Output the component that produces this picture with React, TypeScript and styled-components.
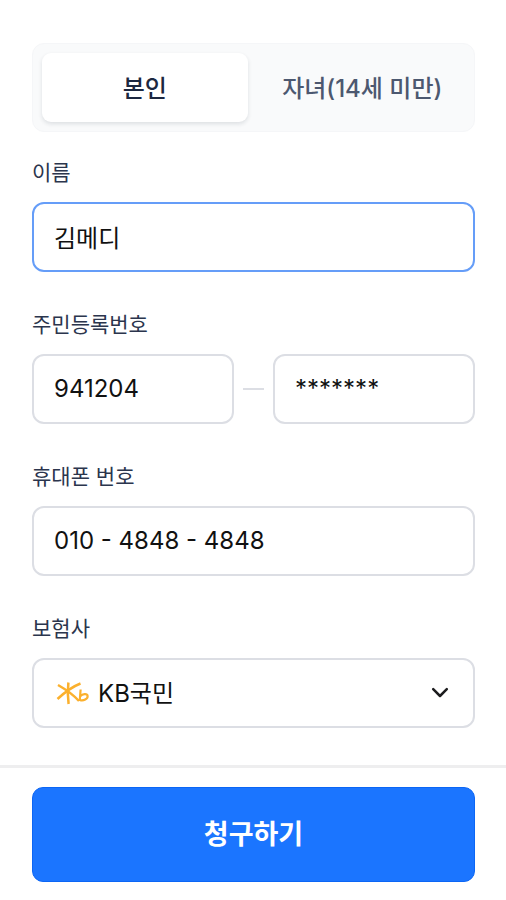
import React, { useState } from 'react';
import styled, { createGlobalStyle, css } from 'styled-components';

const GlobalStyle = createGlobalStyle`
  *, *::before, *::after { box-sizing: border-box; }
  body {
    margin: 0;
    background: #fff;
    color: #111;
    font-family: Inter, "Noto Sans CJK KR", sans-serif;
  }
  button, input, select { font: inherit; color: inherit; }
`;

const Page = styled.div`
  display: flex;
  flex-direction: column;
  min-height: 100vh;
`;

const Form = styled.form`
  display: flex;
  flex-direction: column;
  flex: 1;
  padding: 43px 31px 37px 32px;
`;

const Tabs = styled.div`
  display: grid;
  grid-template-columns: 1fr 1fr;
  gap: 12px;
  padding: 9px;
  margin-bottom: 27px;
  border: 1px solid #f5f6f8;
  border-radius: 12px;
  background: #f9fafb;
`;

const Tab = styled.button<{ $active: boolean }>`
  height: 69px;
  padding: 0 0 2px;
  border: 0;
  border-radius: 9px;
  background: ${({ $active }) => ($active ? '#fff' : 'transparent')};
  box-shadow: ${({ $active }) => ($active ? '0 2px 4px rgba(20, 30, 50, 0.12)' : 'none')};
  color: ${({ $active }) => ($active ? '#1c2740' : '#4c5870')};
  font-size: 24px;
  font-weight: 500;
  white-space: nowrap;
  cursor: pointer;
`;

const Fields = styled.div`
  display: flex;
  flex-direction: column;
  gap: 39px;
`;

const Field = styled.div`
  display: flex;
  flex-direction: column;
  gap: 15px;
`;

const Label = styled.label`
  color: #2b354d;
  font-size: 21px;
  line-height: 28px;
`;

const control = css`
  width: 100%;
  min-width: 0;
  height: 70px;
  border: 2px solid #dcdee4;
  border-radius: 12px;
  background: #fff;
  font-size: 24px;
  outline: none;
`;

const TextInput = styled.input<{ $highlighted?: boolean }>`
  ${control}
  padding: 0 20px 2px;
  border-color: ${({ $highlighted }) => ($highlighted ? '#659df8' : '#dcdee4')};
  &:focus { border-color: #659df8; }
`;

const SplitRow = styled.div`
  display: grid;
  grid-template-columns: 1fr 21px 1fr;
  align-items: center;
  gap: 9px;
`;

const Dash = styled.span`
  height: 2px;
  background: #dcdee4;
`;

const SelectWrap = styled.div`
  position: relative;
`;

const Select = styled.select`
  ${control}
  padding: 0 64px;
  appearance: none;
  cursor: pointer;
`;

const BankLogo = styled.svg`
  position: absolute;
  top: 22px;
  left: 24px;
  pointer-events: none;
`;

const Chevron = styled.svg`
  position: absolute;
  top: 28px;
  right: 26px;
  pointer-events: none;
`;

const Footer = styled.footer`
  padding: 19px 31px 19px 32px;
  border-top: 3px solid #eeeeef;
`;

const Submit = styled.button`
  width: 100%;
  height: 95px;
  padding: 0 0 4px;
  border: 1px solid #0c66f5;
  border-radius: 11px;
  background: #1b75ff;
  color: #fff;
  font-size: 27px;
  font-weight: 600;
  cursor: pointer;
`;

const people = ['본인', '자녀(14세 미만)'];

export default function App() {
  const [person, setPerson] = useState(0);

  return (
    <Page>
      <GlobalStyle />
      <Form id="claim" onSubmit={(e) => e.preventDefault()}>
        <Tabs role="tablist">
          {people.map((label, i) => (
            <Tab
              key={label}
              type="button"
              role="tab"
              aria-selected={person === i}
              $active={person === i}
              onClick={() => setPerson(i)}
            >
              {label}
            </Tab>
          ))}
        </Tabs>
        <Fields>
          <Field>
            <Label htmlFor="name">이름</Label>
            <TextInput id="name" defaultValue="김메디" $highlighted />
          </Field>
          <Field>
            <Label htmlFor="rrn-front">주민등록번호</Label>
            <SplitRow>
              <TextInput id="rrn-front" inputMode="numeric" defaultValue="941204" />
              <Dash />
              <TextInput aria-label="주민등록번호 뒷자리" defaultValue="*******" />
            </SplitRow>
          </Field>
          <Field>
            <Label htmlFor="phone">휴대폰 번호</Label>
            <TextInput id="phone" type="tel" defaultValue="010 - 4848 - 4848" />
          </Field>
          <Field>
            <Label htmlFor="insurer">보험사</Label>
            <SelectWrap>
              <Select id="insurer" defaultValue="kb">
                <option value="kb">KB국민</option>
              </Select>
              <BankLogo width="34" height="26" viewBox="0 0 34 26" fill="none" stroke="#fbb02d" strokeWidth="2.5" aria-hidden="true">
                <path d="M12.4 2.5C11.6 9 11.6 17 12.6 24" />
                <path d="M2 5C9 9 17 14.5 23 21" />
                <path d="M24.5 3.5C18 6 8 13 1.5 19" />
                <path d="M24.6 9.5L23.8 20C27.5 21.4 32 18.8 31.6 15.8C31.2 13.2 26.5 13.6 24.2 16.4" strokeWidth="2.2" />
              </BankLogo>
              <Chevron width="18" height="14" viewBox="0 0 18 14" fill="none" stroke="#1c1c1e" strokeWidth="2.5" strokeLinecap="round" strokeLinejoin="round" aria-hidden="true">
                <path d="M2.2 3.2L9 10L15.8 3.2" />
              </Chevron>
            </SelectWrap>
          </Field>
        </Fields>
      </Form>
      <Footer>
        <Submit type="submit" form="claim">청구하기</Submit>
      </Footer>
    </Page>
  );
}
